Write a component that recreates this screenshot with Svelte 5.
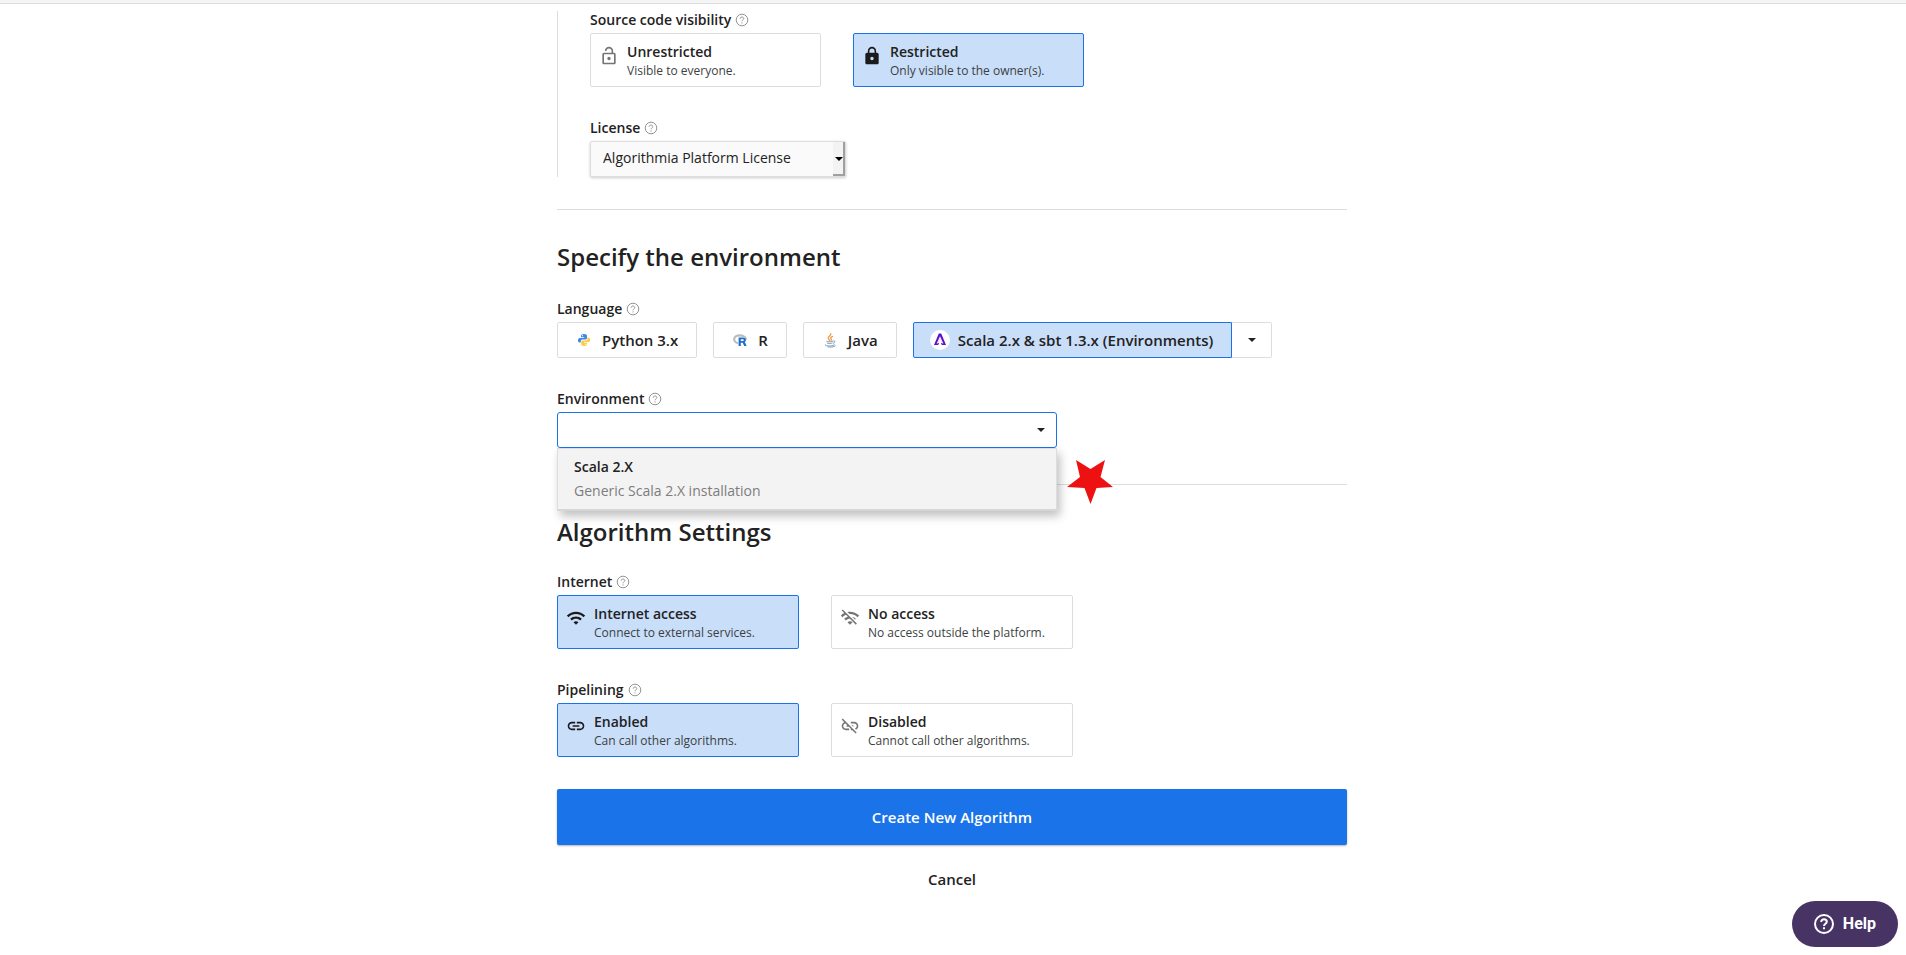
<script>
  let visibility = $state('restricted');
  let internet = $state('on');
  let pipelining = $state('on');
  let language = $state('scala');
  let environment = $state('');

  const icons = {
    lock: 'M18 8h-1V6c0-2.76-2.24-5-5-5S7 3.24 7 6v2H6c-1.1 0-2 .9-2 2v10c0 1.1.9 2 2 2h12c1.1 0 2-.9 2-2V10c0-1.1-.9-2-2-2zm-6 9c-1.1 0-2-.9-2-2s.9-2 2-2 2 .9 2 2-.9 2-2 2zm3.1-9H8.9V6c0-1.71 1.39-3.1 3.1-3.1 1.71 0 3.1 1.39 3.1 3.1v2z',
    lockOpen: 'M12 17c1.1 0 2-.9 2-2s-.9-2-2-2-2 .9-2 2 .9 2 2 2zm6-9h-1V6c0-2.76-2.24-5-5-5S7 3.24 7 6h1.9c0-1.71 1.39-3.1 3.1-3.1 1.71 0 3.1 1.39 3.1 3.1v2H6c-1.1 0-2 .9-2 2v10c0 1.1.9 2 2 2h12c1.1 0 2-.9 2-2V10c0-1.1-.9-2-2-2zm0 12H6V10h12v10z',
    wifi: 'M1 9l2 2c4.97-4.97 13.03-4.97 18 0l2-2C16.93 2.93 7.08 2.93 1 9zm8 8l3 3 3-3c-1.65-1.66-4.34-1.66-6 0zm-4-4l2 2c2.76-2.76 7.24-2.76 10 0l2-2C15.14 9.14 8.87 9.14 5 13z',
    wifiOff: 'M22.99 9C19.15 5.16 13.8 3.76 8.84 4.78l2.52 2.52c3.47-.17 6.99 1.05 9.63 3.7l2-2zm-4 4c-1.29-1.29-2.84-2.13-4.49-2.56l3.53 3.53.96-.97zM2 3.05L5.07 6.1C3.6 6.82 2.22 7.78 1 9l1.99 2c1.24-1.24 2.67-2.16 4.2-2.77l2.24 2.24C7.81 10.89 6.27 11.73 5 13v.01L6.99 15c1.36-1.36 3.14-2.04 4.92-2.06L18.98 20l1.27-1.26L3.29 1.79 2 3.05zM9 17l3 3 3-3c-1.65-1.66-4.34-1.66-6 0z',
    link: 'M3.9 12c0-1.71 1.39-3.1 3.1-3.1h4V7H7c-2.76 0-5 2.24-5 5s2.24 5 5 5h4v-1.9H7c-1.71 0-3.1-1.39-3.1-3.1zM8 13h8v-2H8v2zm9-6h-4v1.9h4c1.71 0 3.1 1.39 3.1 3.1s-1.39 3.1-3.1 3.1h-4V17h4c2.76 0 5-2.24 5-5s-2.24-5-5-5z',
    linkOff: 'M17 7h-4v1.9h4c1.71 0 3.1 1.39 3.1 3.1 0 1.43-.98 2.63-2.31 2.98l1.46 1.46C20.88 15.61 22 13.95 22 12c0-2.76-2.24-5-5-5zm-1 4h-2.19l2 2H16v-2zM2 4.27l3.11 3.11C3.29 8.12 2 9.91 2 12c0 2.76 2.24 5 5 5h4v-1.9H7c-1.71 0-3.1-1.39-3.1-3.1 0-1.59 1.21-2.9 2.76-3.07L8.73 11H8v2h2.73L13 15.27V17h1.73l4.01 4L20 19.74 3.27 3 2 4.27z'
  };
</script>

{#snippet help(topic)}
  <button class="hint" type="button" aria-label="About {topic}">
    <svg viewBox="0 0 14 14" aria-hidden="true">
      <circle cx="7" cy="7" r="5.8" />
      <path d="M5.2 5.7c0-1 .8-1.7 1.8-1.7s1.8.7 1.8 1.6c0 1.2-1.8 1.3-1.8 2.7M7 9.4v1.100" />
    </svg>
  </button>
{/snippet}

{#snippet choiceBody(icon, title, text)}
  <svg class="choice-icon" viewBox="0 0 24 24" aria-hidden="true"><path d={icons[icon]} /></svg>
  <span class="choice-text">
    <strong>{title}</strong>
    <small>{text}</small>
  </span>
{/snippet}

<div class="page">
  <div class="topbar"></div>

  <form class="form" onsubmit={(e) => e.preventDefault()}>
    <section class="nested">
      <div class="label-row"><span id="visibility">Source code visibility</span>{@render help('source code visibility')}</div>
      <div class="choices" role="radiogroup" aria-labelledby="visibility">
        <label class="choice narrow">
          <input type="radio" name="visibility" value="open" bind:group={visibility} />
          {@render choiceBody('lockOpen', 'Unrestricted', 'Visible to everyone.')}
        </label>
        <label class="choice narrow">
          <input type="radio" name="visibility" value="restricted" bind:group={visibility} />
          {@render choiceBody('lock', 'Restricted', 'Only visible to the owner(s).')}
        </label>
      </div>

      <div class="label-row next"><label for="license">License</label>{@render help('license')}</div>
      <div class="license">
        <select id="license">
          <option>Algorithmia Platform License</option>
        </select>
        <span class="license-arrow"><i class="caret"></i></span>
      </div>
    </section>

    <hr />

    <section>
      <h2>Specify the environment</h2>
      <div class="label-row"><span id="language">Language</span>{@render help('language')}</div>
      <div class="languages" role="group" aria-labelledby="language">
        <button type="button" class="lang" class:selected={language === 'python'} onclick={() => (language = 'python')}>
          <svg viewBox="0 0 20 20" aria-hidden="true">
            <path fill="#3f88ea" d="M10 4c-2.3 0-3 .8-3 1.9V7.300h3.200v.6H5.600C4.500 7.900 4 9 4 10.300s.6 2.300 1.600 2.300h1.200v-1.500c0-1 .8-1.700 1.800-1.700h2.900c.9 0 1.500-.7 1.500-1.500V5.900C13 4.700 12 4 10 4z" />
            <circle cx="8.500" cy="5.700" r=".6" fill="#fff" />
            <path fill="#fdcb3b" d="M10.300 16c2.200 0 2.900-.8 2.900-1.900v-1.400H10v-.6h4.500c1.100 0 1.500-1 1.500-2.300s-.5-2.300-1.500-2.300h-1v1.300c0 1-.8 1.800-1.800 1.800H8.800c-.9 0-1.500.7-1.500 1.500v2c0 1.200 1 1.900 3 1.900z" />
            <circle cx="11.700" cy="14.300" r=".6" fill="#fff" />
          </svg>
          Python 3.x
        </button>
        <button type="button" class="lang" class:selected={language === 'r'} onclick={() => (language = 'r')}>
          <svg viewBox="0 0 20 20" aria-hidden="true">
            <ellipse cx="9.700" cy="9.300" rx="5.600" ry="4" fill="none" stroke="#b9bdc3" stroke-width="2.200" />
            <path fill="#fff" d="M8 7h8v9.400H8z" />
            <path d="M14.500 6.300c1.200.8 1.800 1.800 1.600 3" fill="none" stroke="#b9bdc3" stroke-width="1.600" />
            <path fill="#2270c4" fill-rule="evenodd" d="M8.600 7.600h4.900c1.500 0 2.400.9 2.400 2.300 0 1-.5 1.800-1.400 2.100.4.2.6.500.8.900l1.400 3h-2.500l-1.300-2.700c-.2-.3-.3-.4-.7-.4h-1.400v3.100H8.600zM10.800 9.300v1.700H13c1 0 1-1.700 0-1.700z" />
          </svg>
          R
        </button>
        <button type="button" class="lang" class:selected={language === 'java'} onclick={() => (language = 'java')}>
          <svg viewBox="0 0 20 20" fill="none" stroke-linecap="round" aria-hidden="true">
            <path stroke="#f39a4a" stroke-width="1.300" d="M10.800 3.600c.8 2-3.100 2.600-2.600 4.600.2.800 1.100 1.300 1.300 2.200M12.600 6.400c-1.700.7-2.400 1.400-1.500 2.300.5.600.3 1.200-.1 1.600" />
            <path stroke="#7d9fbd" d="M6.600 11.300c-1.200.5 4.800.9 6.300-.1M7.300 13.100c.8.700 3.800.6 4.900 0M13.800 10.900c1.900-.3 1.700 1.700-.4 2.400M5.200 14.700c-2 1.600 8 1.900 9.300.1M8 16.900c2.600.4 6.200.1 7.300-.9" />
          </svg>
          Java
        </button>
        <div class="split">
          <button type="button" class="lang" class:selected={language === 'scala'} onclick={() => (language = 'scala')}>
            <svg viewBox="0 0 20 20" aria-hidden="true">
              <circle cx="10" cy="10" r="10" fill="#fff" />
              <path fill="#5b12c9" d="M8.800 3.500h2.400L16 14.900h-4.200L11 13l1.300-.2L10 8.200l-2.300 4.600L9 13l-.8 1.900H4z" />
              <path fill="#fff" d="M6.600 13.800 10 6.300l3.400 7.500-1-.2L10 8.600l-2.400 5z" />
            </svg>
            Scala 2.x &amp; sbt 1.3.x (Environments)
          </button>
          <button type="button" class="more" aria-label="More languages"><i class="caret"></i></button>
        </div>
      </div>

      <div class="label-row next"><label for="environment">Environment</label>{@render help('environment')}</div>
      <div class="combo">
        <input id="environment" type="text" role="combobox" aria-expanded="true" aria-controls="environment-list" bind:value={environment} />
        <i class="caret"></i>
        <div class="menu" id="environment-list" role="listbox">
          <div class="option" role="option" aria-selected="false">
            <strong>Scala 2.X</strong>
            <span>Generic Scala 2.X installation</span>
          </div>
        </div>
        <svg class="star" viewBox="0 0 46 44" aria-hidden="true">
          <path fill="#ee1111" d="M9 0 23.500 9 38 0 33.500 17 46 27 29.500 28 23.500 44 17.500 28 0 27 13 17z" />
        </svg>
      </div>
    </section>

    <hr class="after-combo" />

    <section>
      <h2 class="tight">Algorithm Settings</h2>
      <div class="label-row"><span id="internet">Internet</span>{@render help('internet')}</div>
      <div class="choices" role="radiogroup" aria-labelledby="internet">
        <label class="choice">
          <input type="radio" name="internet" value="on" bind:group={internet} />
          {@render choiceBody('wifi', 'Internet access', 'Connect to external services.')}
        </label>
        <label class="choice">
          <input type="radio" name="internet" value="off" bind:group={internet} />
          {@render choiceBody('wifiOff', 'No access', 'No access outside the platform.')}
        </label>
      </div>

      <div class="label-row next"><span id="pipelining">Pipelining</span>{@render help('pipelining')}</div>
      <div class="choices" role="radiogroup" aria-labelledby="pipelining">
        <label class="choice">
          <input type="radio" name="pipelining" value="on" bind:group={pipelining} />
          {@render choiceBody('link', 'Enabled', 'Can call other algorithms.')}
        </label>
        <label class="choice">
          <input type="radio" name="pipelining" value="off" bind:group={pipelining} />
          {@render choiceBody('linkOff', 'Disabled', 'Cannot call other algorithms.')}
        </label>
      </div>
    </section>

    <button class="submit" type="submit">Create New Algorithm</button>
    <button class="cancel" type="button">Cancel</button>
  </form>

  <button class="help-launcher" type="button">
    <svg viewBox="0 0 20 20" aria-hidden="true">
      <circle cx="10" cy="10" r="9" />
      <path d="M7.200 8c0-1.600 1.200-2.700 2.800-2.700s2.800 1.100 2.800 2.500c0 1.900-2.800 2.100-2.800 4.200M10 13.300v2" />
    </svg>
    Help
  </button>
</div>

<style>
  :global(body) {
    margin: 0;
    background: #fff;
  }

  .page {
    --ink: #222;
    --line: #ddd;
    --blue: #1a73e8;
    --tint: #c9def9;
    padding: 0 2px 48px 0;
    color: var(--ink);
    font: 400 14px/20px "Open Sans", "Noto Sans", sans-serif;
  }

  .page *,
  .page {
    box-sizing: border-box;
  }

  button,
  input,
  select {
    margin: 0;
    color: inherit;
    font: inherit;
  }

  button {
    cursor: pointer;
  }

  .topbar {
    height: 4px;
    margin-right: -2px;
    background: #f5f5f5;
    border-bottom: 1px solid var(--line);
  }

  .form {
    max-width: 790px;
    margin: 0 auto;
    padding-top: 7px;
  }

  .nested {
    padding-left: 32px;
    border-left: 1px solid var(--line);
  }

  hr {
    height: 1px;
    margin: 32px 0 0;
    border: 0;
    background: var(--line);
  }

  hr.after-combo {
    margin-top: 36px;
  }

  h2 {
    margin: 31px 0 27px;
    font-size: 24px;
    line-height: 32px;
    font-weight: 600;
  }

  h2.tight {
    margin-bottom: 25px;
  }

  .label-row {
    display: flex;
    align-items: center;
    gap: 4px;
    height: 22px;
    padding-bottom: 4px;
    font-weight: 600;
  }

  .next {
    margin-top: 32px;
  }

  .hint {
    display: flex;
    padding: 0;
    border: 0;
    background: none;
  }

  .hint svg {
    width: 14px;
    height: 14px;
    fill: none;
    stroke: #949494;
    stroke-width: 1;
  }

  .choices {
    display: flex;
    flex-wrap: wrap;
    gap: 32px;
  }

  .choice {
    position: relative;
    display: flex;
    align-items: flex-start;
    gap: 8px;
    width: 242px;
    padding: 8px 8px 6px;
    border: 1px solid var(--line);
    border-radius: 2px;
    cursor: pointer;
  }

  .choice.narrow {
    width: 231px;
  }

  .choice input {
    position: absolute;
    inset: 0;
    width: 100%;
    height: 100%;
    opacity: 0;
  }

  .choice:has(input:checked) {
    background: var(--tint);
    border-color: var(--blue);
  }

  .choice-icon {
    flex: none;
    width: 20px;
    height: 20px;
    margin-top: 4px;
    fill: #757575;
  }

  input:checked + .choice-icon {
    fill: #1b1b1b;
  }

  .choice-text {
    display: flex;
    flex-direction: column;
  }

  strong {
    font-weight: 600;
  }

  small {
    color: #3c3f43;
    font-size: 12px;
    line-height: 18px;
  }

  .caret {
    width: 0;
    height: 0;
    border: 4px solid transparent;
    border-top-color: currentColor;
    border-bottom: 0;
  }

  .license {
    display: grid;
    width: 256px;
    height: 36px;
    border: 1px solid var(--line);
    border-radius: 2px;
    background: #fafafa;
    box-shadow: 0 1px 3px rgb(0 0 0 / 20%);
  }

  .license > * {
    grid-area: 1 / 1;
  }

  .license select {
    appearance: none;
    padding: 0 12px 2px;
    border: 0;
    background: none;
  }

  .license-arrow {
    justify-self: end;
    display: flex;
    align-items: center;
    justify-content: center;
    width: 12px;
    background: #f3f3f3;
    box-shadow: inset -2px -2px #a0a0a0;
    color: #000;
    pointer-events: none;
  }

  .languages {
    display: flex;
    flex-wrap: wrap;
    gap: 16px;
  }

  .split {
    display: flex;
  }

  .lang {
    display: flex;
    align-items: center;
    gap: 8px;
    height: 36px;
    padding: 0 18px 0 16px;
    border: 1px solid var(--line);
    border-radius: 2px;
    background: #fff;
    font-size: 15px;
    font-weight: 600;
  }

  .lang svg {
    width: 20px;
    height: 20px;
  }

  .lang.selected {
    background: var(--tint);
    border-color: var(--blue);
  }

  .split .lang {
    border-radius: 2px 0 0 2px;
  }

  .more {
    display: flex;
    align-items: center;
    justify-content: center;
    width: 40px;
    padding: 0;
    border: 1px solid var(--line);
    border-left: 0;
    border-radius: 0 2px 2px 0;
    background: #fff;
  }

  .combo {
    position: relative;
    display: flex;
    align-items: center;
    max-width: 500px;
    height: 36px;
    border: 1px solid var(--blue);
    border-radius: 3px;
    padding-right: 11px;
  }

  .combo input {
    flex: 1;
    min-width: 0;
    padding: 0 16px;
    border: 0;
    outline: 0;
    background: none;
  }

  .menu {
    position: absolute;
    z-index: 1;
    top: 100%;
    left: -1px;
    right: -1px;
    margin-top: 1px;
    border: 1px solid var(--line);
    border-bottom: 2px solid #d6d6d6;
    background: #f3f3f3;
    box-shadow: 3px 5px 9px rgb(0 0 0 / 25%);
  }

  .option {
    display: flex;
    flex-direction: column;
    gap: 4px;
    padding: 8px 16px;
  }

  .option span {
    color: #7d7d7d;
  }

  .star {
    position: absolute;
    top: 47px;
    left: 509px;
    width: 46px;
    height: 44px;
  }

  .submit,
  .cancel {
    display: block;
    width: 100%;
    border: 0;
    font-size: 15px;
    font-weight: 600;
  }

  .submit {
    height: 56px;
    margin-top: 32px;
    border-radius: 2px;
    background: var(--blue);
    color: #fff;
    box-shadow: 0 1px 2px rgb(0 0 0 / 30%);
  }

  .cancel {
    width: fit-content;
    height: 36px;
    margin: 16px auto 0;
    padding: 0 16px;
    background: none;
  }

  .help-launcher {
    position: fixed;
    right: 8px;
    bottom: 8px;
    display: flex;
    align-items: center;
    gap: 9px;
    height: 46px;
    padding: 0 22px;
    border: 0;
    border-radius: 23px;
    background: #483365;
    color: #fff;
    font: 700 16px/20px Roboto, sans-serif;
  }

  .help-launcher svg {
    width: 20px;
    height: 20px;
    fill: none;
    stroke: #fff;
    stroke-width: 2;
  }
</style>
